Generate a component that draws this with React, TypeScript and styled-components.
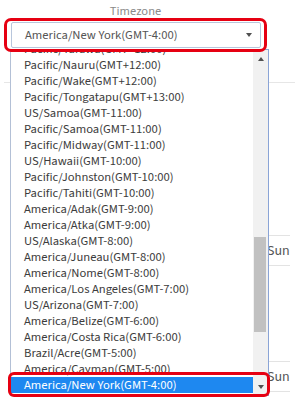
import React from "react";
import styled, { createGlobalStyle } from "styled-components";

const GlobalStyle = createGlobalStyle`
	html, body {
		margin: 0;
		padding: 0;
		background: #fff;
	}
	body {
		font-family: "Source Sans 3", Lato, Arial, sans-serif;
	}
`;

const TIMEZONES = [
	"Pacific/Tarawa(GMT+12:00)",
	"Pacific/Nauru(GMT+12:00)",
	"Pacific/Wake(GMT+12:00)",
	"Pacific/Tongatapu(GMT+13:00)",
	"US/Samoa(GMT-11:00)",
	"Pacific/Samoa(GMT-11:00)",
	"Pacific/Midway(GMT-11:00)",
	"US/Hawaii(GMT-10:00)",
	"Pacific/Johnston(GMT-10:00)",
	"Pacific/Tahiti(GMT-10:00)",
	"America/Adak(GMT-9:00)",
	"America/Atka(GMT-9:00)",
	"US/Alaska(GMT-8:00)",
	"America/Juneau(GMT-8:00)",
	"America/Nome(GMT-8:00)",
	"America/Los Angeles(GMT-7:00)",
	"US/Arizona(GMT-7:00)",
	"America/Belize(GMT-6:00)",
	"America/Costa Rica(GMT-6:00)",
	"Brazil/Acre(GMT-5:00)",
	"America/Cayman(GMT-5:00)",
	"America/New York(GMT-4:00)",
];

const SELECTED = "America/New York(GMT-4:00)";

const Page = styled.div`
	position: relative;
	width: 295px;
	height: 400px;
	overflow: hidden;
	padding-left: 4px;
	box-sizing: border-box;
`;

const Field = styled.div`
	width: 263px;
	display: flex;
	flex-direction: column;
	align-items: stretch;
`;

const Label = styled.div`
	text-align: center;
	font-size: 12.5px;
	line-height: 13px;
	padding-top: 5px;
	color: #8a8a8a;
`;

const Highlight = styled.div`
	position: relative;
	z-index: 3;
	border: 3px solid #e60012;
	border-radius: 7px;
	padding: 1px 3px 1px 4px;
`;

const SelectBox = styled.div`
	height: 26px;
	box-sizing: border-box;
	border: 1px solid #b8c6dc;
	border-radius: 2px;
	background: #fff;
	display: flex;
	align-items: center;
	justify-content: space-between;
	padding: 0 8px 0 13px;
	font-size: 12.6px;
	color: #555;
`;

const Caret = styled.span<{ $up?: boolean }>`
	width: 0;
	height: 0;
	border-left: 3.5px solid transparent;
	border-right: 3.5px solid transparent;
	${(p) =>
		p.$up
			? "border-bottom: 4px solid #505050;"
			: "border-top: 4px solid #505050;"}
`;

const Backdrop = styled.div`
	display: flex;
	flex-direction: column;
`;

const TopRule = styled.div`
	margin-top: 30px;
	border-top: 1px solid #e6e6e6;
`;

const DayRow = styled.div<{ $gap: number }>`
	margin-top: ${(p) => p.$gap}px;
	margin-left: 196px;
	width: 90px;
	height: 31px;
	box-sizing: border-box;
	border-top: 1px solid #e3e3e3;
	border-bottom: 1px solid #e3e3e3;
	display: flex;
	align-items: center;
	padding-left: 67px;
	font-size: 14px;
	color: #555;
`;

const ListBox = styled.div`
	position: absolute;
	z-index: 2;
	left: 10px;
	top: 49px;
	width: 259px;
	height: 347px;
	box-sizing: border-box;
	border: 1px solid #8aa4d6;
	border-left-color: #b3c0d6;
	background: #fff;
	display: flex;
`;

const Viewport = styled.div`
	flex: 1;
	overflow: hidden;
`;

const Items = styled.div`
	margin-top: -9px;
	display: flex;
	flex-direction: column;
`;

const Item = styled.div<{ $selected?: boolean }>`
	height: 16px;
	line-height: 16px;
	padding-left: 13px;
	font-size: 12.6px;
	white-space: nowrap;
	color: ${(p) => (p.$selected ? "#fff" : "#3c3c3c")};
	background: ${(p) => (p.$selected ? "#1e88f0" : "transparent")};
`;

const Scrollbar = styled.div`
	width: 15px;
	background: #f1f1f1;
	display: flex;
	flex-direction: column;
`;

const ArrowButton = styled.div`
	height: 17px;
	display: flex;
	align-items: center;
	justify-content: center;
`;

const Track = styled.div`
	flex: 1;
`;

const Thumb = styled.div<{ $offset: number; $size: number }>`
	margin-top: ${(p) => p.$offset}px;
	margin-left: 1px;
	width: 12px;
	height: ${(p) => p.$size}px;
	background: #c1c1c1;
`;

const Callout = styled.div`
	position: absolute;
	z-index: 4;
	left: 8px;
	top: 372px;
	width: 262px;
	height: 25px;
	box-sizing: border-box;
	border: 3px solid #e60012;
	border-radius: 6px;
`;

export default function App() {
	return (
		<>
			<GlobalStyle />
			<Page>
				<Field>
					<Label>Timezone</Label>
					<Highlight>
						<SelectBox>
							<span>{SELECTED}</span>
							<Caret />
						</SelectBox>
					</Highlight>
				</Field>
				<Backdrop>
					<TopRule />
					<DayRow $gap={152}>Sun</DayRow>
					<DayRow $gap={95}>Sun</DayRow>
				</Backdrop>
				<ListBox>
					<Viewport>
						<Items>
							{TIMEZONES.map((tz) => (
								<Item key={tz} $selected={tz === SELECTED}>
									{tz}
								</Item>
							))}
						</Items>
					</Viewport>
					<Scrollbar>
						<ArrowButton>
							<Caret $up />
						</ArrowButton>
						<Track>
							<Thumb $offset={170} $size={95} />
						</Track>
						<ArrowButton>
							<Caret />
						</ArrowButton>
					</Scrollbar>
				</ListBox>
				<Callout />
			</Page>
		</>
	);
}
